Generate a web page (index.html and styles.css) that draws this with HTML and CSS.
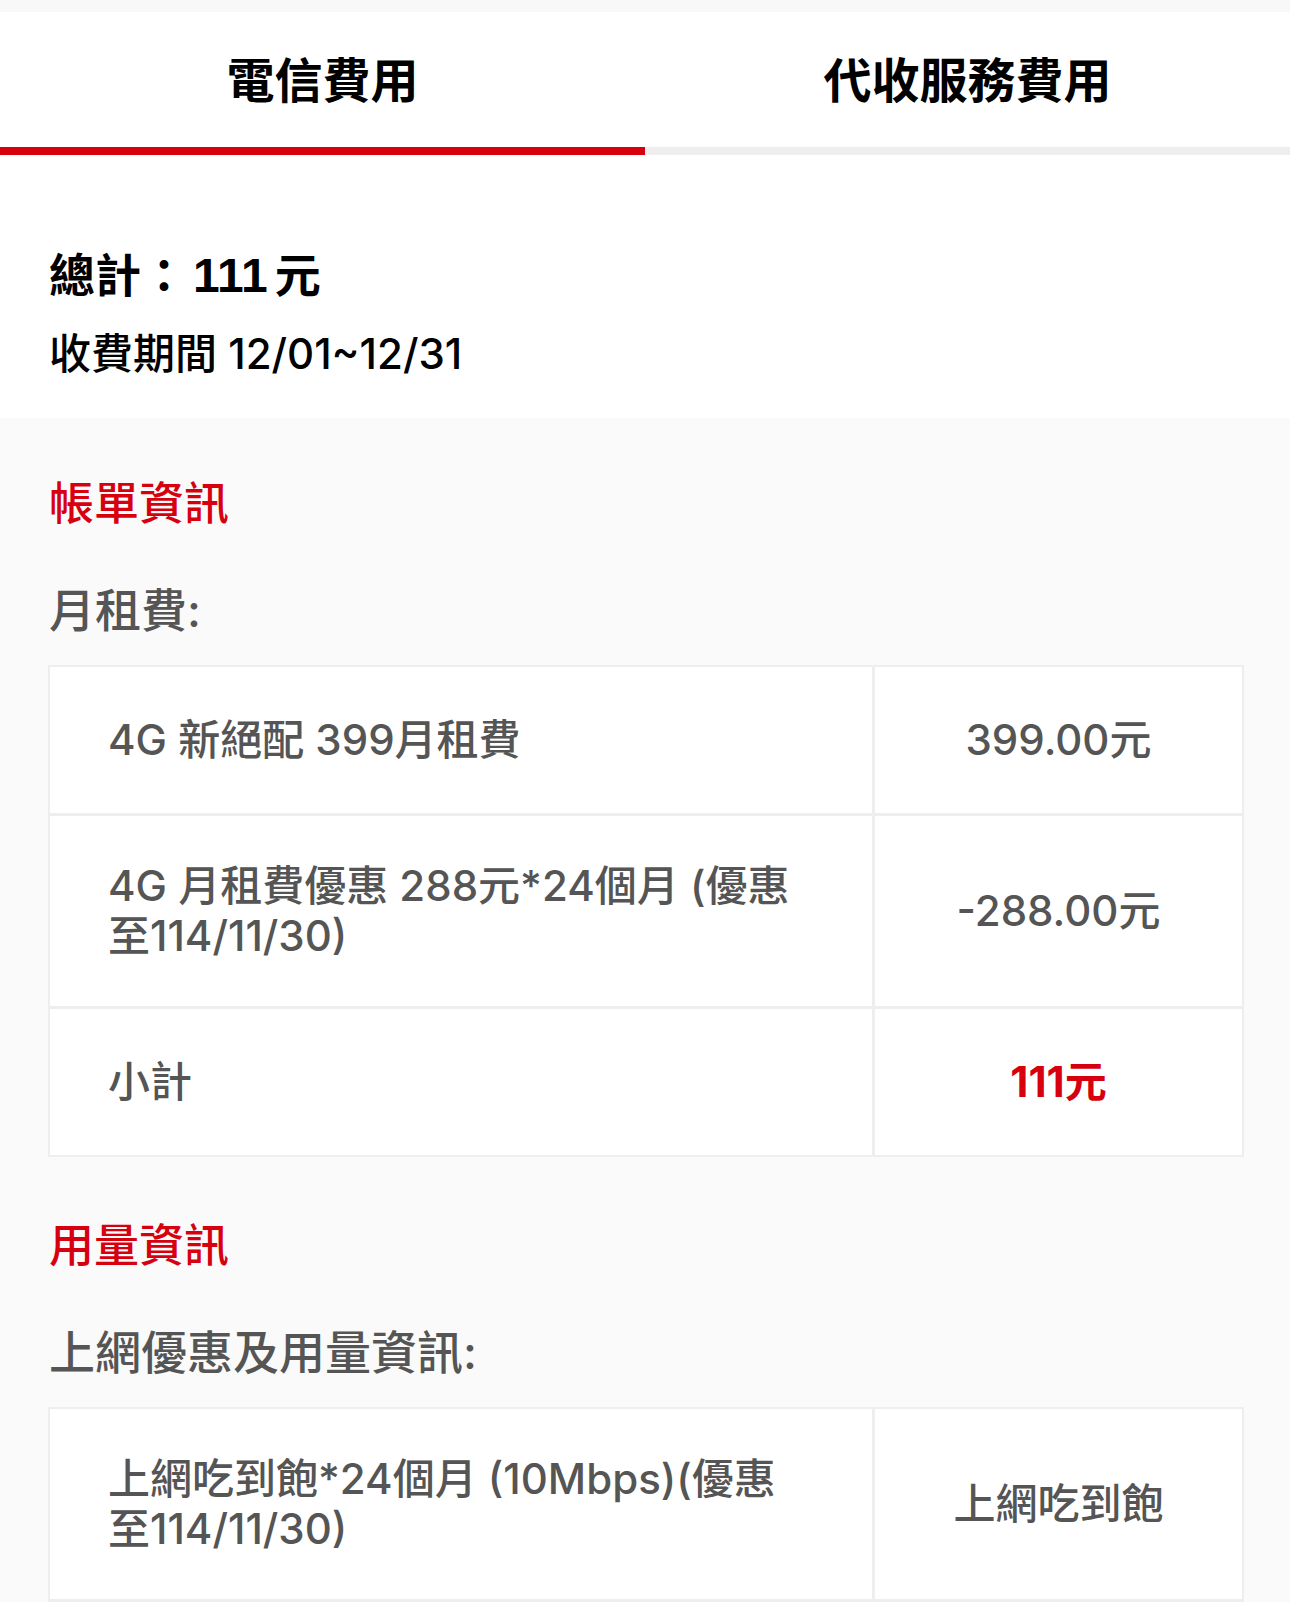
FILE: index.html
```html
<!DOCTYPE html>
<html lang="zh-Hant">
<head>
<meta charset="utf-8">
<title>電信費用</title>
<link rel="stylesheet" href="styles.css">
</head>
<body>
<div class="top-strip"></div>
<nav class="tabs">
  <div class="tab tab-active">電信費用</div>
  <div class="tab">代收服務費用</div>
</nav>
<section class="summary">
  <div class="total">總計：<span class="total-amount">111</span><span class="total-unit">元</span></div>
  <div class="period">收費期間 12/01~12/31</div>
</section>
<main class="details">
  <h2 class="section-title">帳單資訊</h2>
  <h3 class="label">月租費:</h3>
  <div class="table">
    <div class="cell cell-name">4G 新絕配 399月租費</div>
    <div class="cell cell-value">399.00元</div>
    <div class="cell cell-name">4G 月租費優惠 288元*24個月 (優惠至114/11/30)</div>
    <div class="cell cell-value">-288.00元</div>
    <div class="cell cell-name">小計</div>
    <div class="cell cell-value cell-red">111元</div>
  </div>
  <h2 class="section-title section-title-2">用量資訊</h2>
  <h3 class="label">上網優惠及用量資訊:</h3>
  <div class="table">
    <div class="cell cell-name">上網吃到飽*24個月 (10Mbps)(優惠至114/11/30)</div>
    <div class="cell cell-value">上網吃到飽</div>
    <div class="cell cell-name cell-tail"></div>
    <div class="cell cell-value cell-tail"></div>
  </div>
</main>
</body>
</html>
```
FILE: styles.css
```css
* { box-sizing: border-box; }
html, body {
  margin: 0;
  padding: 0;
}
body {
  background: #fafafa;
  font-family: "Inter", "Noto Sans CJK TC", sans-serif;
  color: #000;
}
.top-strip {
  height: 12px;
  background: #f8f8f8;
}
.tabs {
  display: flex;
  background: #fff;
}
.tab {
  flex: 1;
  height: 143px;
  display: flex;
  align-items: center;
  justify-content: center;
  padding-bottom: 6px;
  font-size: 48px;
  font-weight: 700;
  color: #000;
  border-bottom: 8px solid #eeeeee;
}
.tab-active {
  border-bottom-color: #d7000f;
}
.summary {
  background: #fff;
  padding: 93px 49px 39px;
}
.total {
  font-family: "Liberation Sans", "Noto Sans CJK TC", sans-serif;
  font-size: 46px;
  line-height: 55px;
  font-weight: 700;
}
.total-amount {
  font-size: 48px;
  margin-left: 6px;
}
.total-unit {
  margin-left: 7px;
}
.period {
  margin-top: 25px;
  font-size: 42px;
  line-height: 50px;
  font-weight: 500;
}
.details {
  padding: 0 46px 0 48px;
}
.section-title {
  margin: 59px 0 0 1px;
  font-size: 45px;
  line-height: 54px;
  font-weight: 500;
  color: #d7000f;
}
.section-title-2 {
  margin-top: 62px;
}
.label {
  margin: 52px 0 0 1px;
  font-size: 46px;
  line-height: 54px;
  font-weight: 500;
  color: #555;
}
.table {
  margin-top: 28px;
  display: grid;
  grid-template-columns: 822px 367px;
  gap: 3px;
  padding: 2px;
  background: #eeeeee;
}
.cell {
  background: #fff;
  min-height: 146px;
  padding: 45px 62px 45px 58px;
  display: flex;
  align-items: center;
  font-size: 42px;
  line-height: 50px;
  font-weight: 500;
  color: #555;
}
.cell-value {
  justify-content: center;
  text-align: center;
  padding: 45px 10px;
}
.cell-red {
  color: #d7000f;
  font-weight: 700;
}
.cell-tail {
  min-height: 20px;
  padding: 0;
}
```
